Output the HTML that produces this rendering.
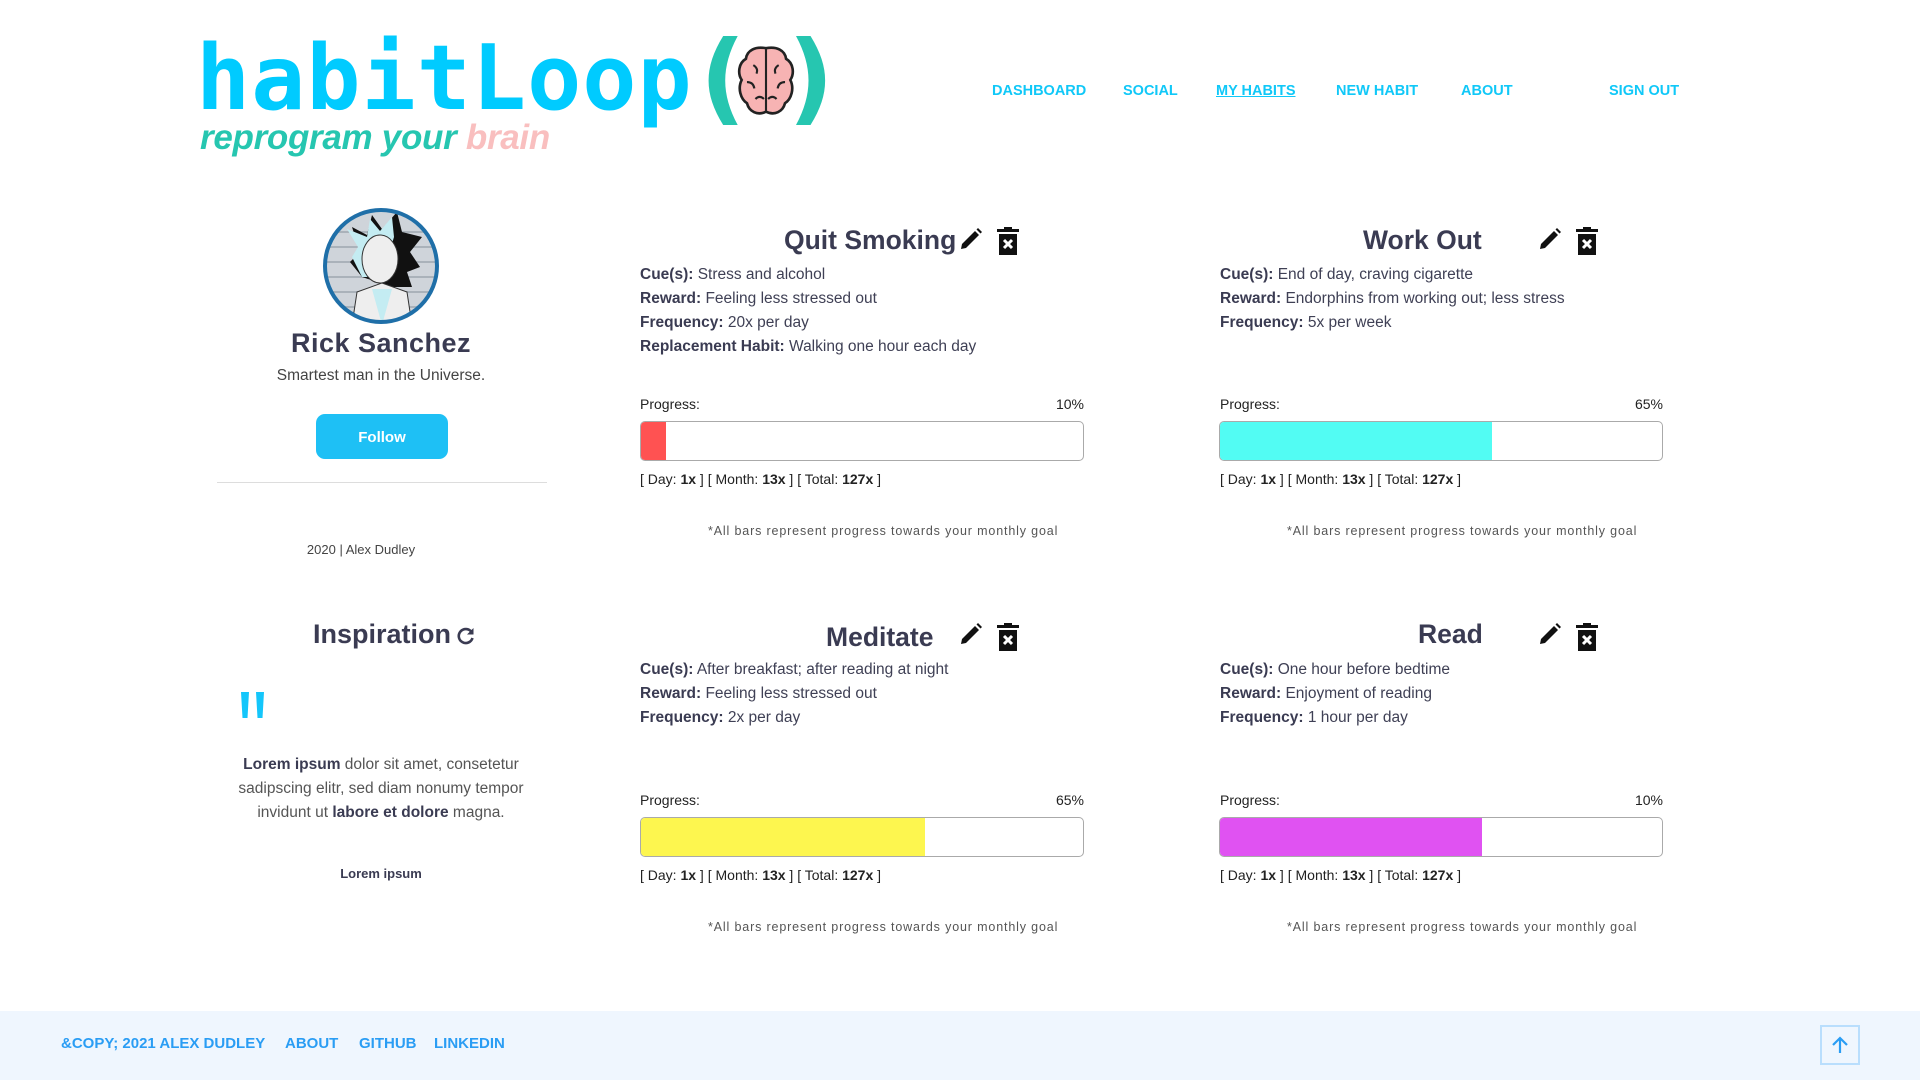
<!DOCTYPE html>
<html><head><meta charset="utf-8"><style>
*{margin:0;padding:0;box-sizing:border-box}
body{width:1920px;height:1080px;position:relative;background:#fff;font-family:"Liberation Sans",sans-serif;color:#3a3b52;overflow:hidden}
.a{position:absolute;white-space:nowrap}
.nav{top:83px;font-weight:bold;font-size:14.5px;color:#10c8f8}
.t{font-size:26.5px;font-weight:bold;color:#3a3b52}
.ln{font-size:15.5px;color:#3f4055}
.ln b{color:#3a3b52}
.pl{font-size:14px;color:#222}
.bar{height:40px;width:444px;border:1.5px solid #aaa;border-radius:5px;overflow:hidden}
.bar div{height:100%}
.note{font-size:12.5px;color:#555;letter-spacing:.85px}
.ft{top:1035px;font-weight:bold;font-size:15px;color:#2a9df4}
</style></head><body>

<div class="a" style="left:196px;top:26px;font-family:'DejaVu Sans Mono','Liberation Mono',monospace;font-weight:bold;font-size:90px;color:#00cbff;letter-spacing:1px">habitLoop</div>
<div class="a" style="left:700px;top:28px;font-family:'DejaVu Sans','Liberation Sans',sans-serif;font-weight:bold;font-size:100px;color:#26c6b0;line-height:1">(</div>
<div class="a" style="left:788px;top:28px;font-family:'DejaVu Sans','Liberation Sans',sans-serif;font-weight:bold;font-size:100px;color:#26c6b0;line-height:1">)</div>
<svg class="a" style="left:734px;top:44px" width="64" height="74" viewBox="0 0 60 70">
<path d="M30 4 C20 2 12 6 11 14 C4 18 3 28 7 34 C3 42 6 52 12 56 C14 64 22 68 30 64 C38 68 46 64 48 56 C54 52 57 42 53 34 C57 28 56 18 49 14 C48 6 40 2 30 4Z" fill="#f7b3b3" stroke="#222" stroke-width="2.5"/>
<path d="M30 5 V63 M18 20 q5 3 3 8 M42 20 q-5 3 -3 8 M12 36 q6 0 7 6 M48 36 q-6 0 -7 6 M20 52 q4 -4 8 0 M40 52 q-4 -4 -8 0" stroke="#222" stroke-width="2" fill="none"/>
</svg>
<div class="a" style="left:200px;top:118px;font-size:35px;font-weight:bold;font-style:italic;color:#26c6b0;letter-spacing:-0.3px">reprogram your <span style="color:#f9bfbf">brain</span></div>

<div class="a nav" style="left:992px">DASHBOARD</div>
<div class="a nav" style="left:1123px">SOCIAL</div>
<div class="a nav" style="left:1216px;text-decoration:underline">MY HABITS</div>
<div class="a nav" style="left:1336px">NEW HABIT</div>
<div class="a nav" style="left:1461px">ABOUT</div>
<div class="a nav" style="left:1609px">SIGN OUT</div>

<!-- profile -->
<svg class="a" style="left:322px;top:207px" width="118" height="118" viewBox="0 0 118 118">
<defs><clipPath id="c"><circle cx="59" cy="59" r="56"/></clipPath></defs>
<g clip-path="url(#c)"><rect width="118" height="118" fill="#cfd4da"/>
<g stroke="#aab2ba" stroke-width="2"><line x1="0" y1="25" x2="118" y2="25"/><line x1="0" y1="40" x2="118" y2="40"/><line x1="0" y1="55" x2="118" y2="55"/><line x1="0" y1="70" x2="118" y2="70"/><line x1="0" y1="85" x2="118" y2="85"/><line x1="0" y1="100" x2="118" y2="100"/></g>
<path d="M30 20 L45 28 L50 8 L60 22 L75 5 L80 25 L100 30 L88 45 L98 60 L85 65 L90 80 L70 80 L40 70 L28 55 L38 45 Z" fill="#111"/>
<path d="M25 22 L45 30 L48 12 L58 24 L70 10 L72 30 L60 70 L40 70 L30 50 L36 40 Z" fill="#c4ecf2"/>
<ellipse cx="58" cy="52" rx="18" ry="24" fill="#eee" stroke="#333"/>
<path d="M30 118 L35 85 L60 76 L85 85 L90 118Z" fill="#eee" stroke="#333"/>
<path d="M50 82 L60 118 L70 82Z" fill="#c4ecf2"/></g>
<circle cx="59" cy="59" r="56" fill="none" stroke="#1f6fa8" stroke-width="4"/>
</svg>
<div class="a" style="left:231px;width:300px;text-align:center;top:328px;font-size:27px;font-weight:bold;letter-spacing:.5px">Rick Sanchez</div>
<div class="a" style="left:231px;width:300px;text-align:center;top:367px;font-size:15.5px;color:#444">Smartest man in the Universe.</div>
<div class="a" style="left:316px;top:414px;width:132px;height:45px;background:#1ec0f5;border-radius:9px;color:#fff;font-weight:bold;font-size:15px;text-align:center;line-height:47px">Follow</div>
<div class="a" style="left:217px;top:482px;width:330px;height:1px;background:#ddd"></div>
<div class="a" style="left:261px;width:200px;text-align:center;top:542px;font-size:13px;color:#444">2020 | Alex Dudley</div>

<div class="a" style="left:313px;top:619px;font-size:27px;font-weight:bold">Inspiration</div>
<svg class="a" style="left:456px;top:626px" width="20" height="20" viewBox="0 0 20 20"><path d="M15.5 6 A7 7 0 1 0 16.5 12" fill="none" stroke="#3a3b52" stroke-width="2.6"/><path d="M17.5 2 V8.5 H11Z" fill="#3a3b52"/></svg>
<svg class="a" style="left:240px;top:692px" width="26" height="27"><path d="M1 0 H9 L7.5 26 H2.5Z M16 0 H24 L22.5 26 H17.5Z" fill="#14c6fb"/></svg>
<div class="a" style="left:221px;width:320px;text-align:center;top:753px;font-size:15.5px;line-height:24px;color:#555;white-space:normal"><b style="color:#3a3b52">Lorem ipsum</b> dolor sit amet, consetetur sadipscing elitr, sed diam nonumy tempor invidunt ut <b style="color:#3a3b52">labore et dolore</b> magna.</div>
<div class="a" style="left:281px;width:200px;text-align:center;top:866px;font-size:13px;font-weight:bold">Lorem ipsum</div>

<!-- cards -->
<div class="a t" style="left:784px;top:225px">Quit Smoking</div>
<div class="a t" style="left:1363px;top:225px">Work Out</div>
<div class="a t" style="left:826px;top:622px">Meditate</div>
<div class="a t" style="left:1418px;top:619px">Read</div>

<svg width="0" height="0" style="position:absolute"><defs>
<g id="pen"><path d="M2 22 L3 17 L16 4 L20 8 L7 21Z M17.5 2.5 L19 1 L23 5 L21.5 6.5Z" fill="#111"/></g>
<g id="tr"><rect x="0" y="2" width="22" height="3" fill="#111"/><rect x="7" y="0" width="8" height="3" fill="#111"/><path d="M2 7 H20 V28 H2Z" fill="#111"/><path d="M7 13 L15 21 M15 13 L7 21" stroke="#fff" stroke-width="3"/></g>
</defs></svg>
<svg class="a" style="left:959px;top:227px" width="24" height="24"><use href="#pen"/></svg>
<svg class="a" style="left:997px;top:227px" width="22" height="29"><use href="#tr"/></svg>
<svg class="a" style="left:1538px;top:227px" width="24" height="24"><use href="#pen"/></svg>
<svg class="a" style="left:1576px;top:227px" width="22" height="29"><use href="#tr"/></svg>
<svg class="a" style="left:959px;top:622px" width="24" height="24"><use href="#pen"/></svg>
<svg class="a" style="left:997px;top:623px" width="22" height="29"><use href="#tr"/></svg>
<svg class="a" style="left:1538px;top:622px" width="24" height="24"><use href="#pen"/></svg>
<svg class="a" style="left:1576px;top:623px" width="22" height="29"><use href="#tr"/></svg>

<div class="a ln" style="left:640px;top:263px;line-height:24px"><b>Cue(s):</b> Stress and alcohol<br><b>Reward:</b> Feeling less stressed out<br><b>Frequency:</b> 20x per day<br><b>Replacement Habit:</b> Walking one hour each day</div>
<div class="a ln" style="left:1220px;top:263px;line-height:24px"><b>Cue(s):</b> End of day, craving cigarette<br><b>Reward:</b> Endorphins from working out; less stress<br><b>Frequency:</b> 5x per week</div>
<div class="a ln" style="left:640px;top:658px;line-height:24px"><b>Cue(s):</b> After breakfast; after reading at night<br><b>Reward:</b> Feeling less stressed out<br><b>Frequency:</b> 2x per day</div>
<div class="a ln" style="left:1220px;top:658px;line-height:24px"><b>Cue(s):</b> One hour before bedtime<br><b>Reward:</b> Enjoyment of reading<br><b>Frequency:</b> 1 hour per day</div>

<!-- progress -->
<div class="a pl" style="left:640px;top:396px">Progress:</div><div class="a pl" style="left:1004px;width:80px;text-align:right;top:396px">10%</div>
<div class="a bar" style="left:640px;top:421px"><div style="width:25px;background:#ff5252"></div></div>
<div class="a pl" style="left:640px;top:471px">[ Day: <b>1x</b> ] [ Month: <b>13x</b> ] [ Total: <b>127x</b> ]</div>
<div class="a note" style="left:708px;top:524px">*All bars represent progress towards your monthly goal</div>

<div class="a pl" style="left:1220px;top:396px">Progress:</div><div class="a pl" style="left:1583px;width:80px;text-align:right;top:396px">65%</div>
<div class="a bar" style="left:1219px;top:421px"><div style="width:272px;background:#52fcf3"></div></div>
<div class="a pl" style="left:1220px;top:471px">[ Day: <b>1x</b> ] [ Month: <b>13x</b> ] [ Total: <b>127x</b> ]</div>
<div class="a note" style="left:1287px;top:524px">*All bars represent progress towards your monthly goal</div>

<div class="a pl" style="left:640px;top:792px">Progress:</div><div class="a pl" style="left:1004px;width:80px;text-align:right;top:792px">65%</div>
<div class="a bar" style="left:640px;top:817px"><div style="width:284px;background:#fdf64f"></div></div>
<div class="a pl" style="left:640px;top:867px">[ Day: <b>1x</b> ] [ Month: <b>13x</b> ] [ Total: <b>127x</b> ]</div>
<div class="a note" style="left:708px;top:920px">*All bars represent progress towards your monthly goal</div>

<div class="a pl" style="left:1220px;top:792px">Progress:</div><div class="a pl" style="left:1583px;width:80px;text-align:right;top:792px">10%</div>
<div class="a bar" style="left:1219px;top:817px"><div style="width:262px;background:#e052f2"></div></div>
<div class="a pl" style="left:1220px;top:867px">[ Day: <b>1x</b> ] [ Month: <b>13x</b> ] [ Total: <b>127x</b> ]</div>
<div class="a note" style="left:1287px;top:920px">*All bars represent progress towards your monthly goal</div>

<!-- footer -->
<div class="a" style="left:0;top:1011px;width:1920px;height:69px;background:#eff6fe"></div>
<div class="a ft" style="left:61px">&amp;COPY; 2021 ALEX DUDLEY</div>
<div class="a ft" style="left:285px">ABOUT</div>
<div class="a ft" style="left:359px">GITHUB</div>
<div class="a ft" style="left:434px">LINKEDIN</div>
<div class="a" style="left:1820px;top:1025px;width:40px;height:40px;border:2px solid #b9defd"></div>
<svg class="a" style="left:1830px;top:1035px" width="20" height="20" viewBox="0 0 20 20"><path d="M10 18 V3 M3 10 L10 3 L17 10" fill="none" stroke="#2a9df4" stroke-width="2.2"/></svg>
</body></html>
